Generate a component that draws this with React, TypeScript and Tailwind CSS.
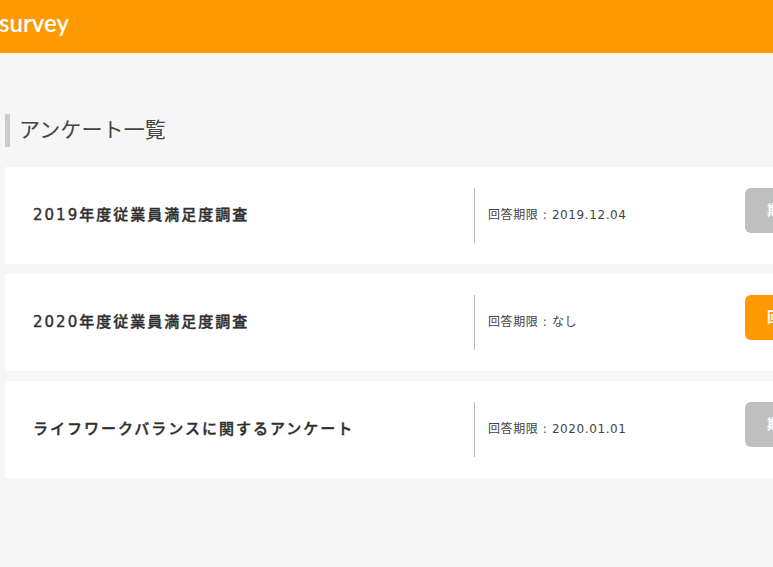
import React from 'react';

const surveys = [
  { title: '2019年度従業員満足度調査', deadline: '2019.12.04', label: '期限切れ', active: false },
  { title: '2020年度従業員満足度調査', deadline: 'なし', label: '回答する', active: true },
  { title: 'ライフワークバランスに関するアンケート', deadline: '2020.01.01', label: '期限切れ', active: false },
];

const font = { fontFamily: '"DejaVu Sans", "Noto Sans CJK JP", sans-serif' };

export default function App() {
  return (
    <div className="h-[567px] w-[773px] overflow-hidden bg-[#f6f6f6] text-[#333333]" style={font}>
      <header className="flex h-[53px] items-start overflow-hidden bg-[#ff9900]">
        <div className="ml-[-1px] mt-[8px] font-['Lato',sans-serif] text-[24px] font-semibold leading-[30px] text-white">
          survey
        </div>
      </header>

      <main className="w-[900px] pl-[5px] pt-[61px]">
        <h1 className="flex h-[33px] items-center border-l-[5px] border-[#cccccc] pl-[9px] text-[21px] font-normal tracking-[0.1px] text-[#444444]">
          アンケート一覧
        </h1>

        <ul className="mt-[20px] flex flex-col gap-[10px]">
          {surveys.map(s => (
            <li key={s.title} className="flex h-[97px] items-start bg-white pt-[21px]">
              <div className="flex h-[55px] w-[469px] items-center pl-[28px] text-[15px] font-medium leading-none tracking-[2px] text-[#2f2f2f] [-webkit-text-stroke:0.4px_#2f2f2f]">
                {s.title}
              </div>
              <div className="flex h-[55px] w-[271px] items-center border-l border-[#bbbbbb] pb-[2px] pl-[13px] text-[12px] tracking-[0.6px] text-[#444444]">
                回答期限&nbsp;:&nbsp;{s.deadline}
              </div>
              <div
                className={`flex h-[45px] items-center justify-center rounded-[6px] px-[22px] text-[14px] font-bold text-white ${
                  s.active ? 'bg-[#ff9900]' : 'bg-[#bfbfbf]'
                }`}
              >
                {s.label}
              </div>
            </li>
          ))}
        </ul>
      </main>
    </div>
  );
}
